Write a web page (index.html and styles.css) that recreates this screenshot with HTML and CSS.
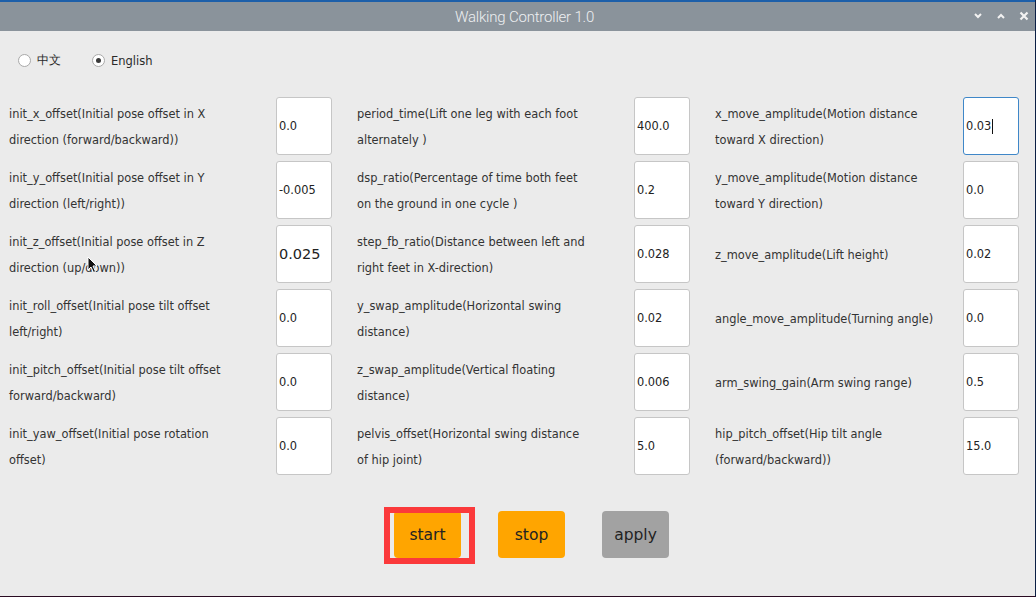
FILE: index.html
```html
<!DOCTYPE html>
<html>
<head>
<meta charset="utf-8">
<link rel="stylesheet" href="styles.css">
</head>
<body>
<div class="window">
  <div class="titlebar">
    <span class="title">Walking Controller 1.0</span>
    <div class="controls">
      <svg width="10" height="8" viewBox="0 0 10 8"><path d="M2 2 L5 5 L8 2" fill="none" stroke="#f2f2f2" stroke-width="2"/></svg>
      <svg width="10" height="8" viewBox="0 0 10 8"><path d="M2 6 L5 3 L8 6" fill="none" stroke="#f2f2f2" stroke-width="2"/></svg>
      <svg width="10" height="10" viewBox="0 0 10 10"><path d="M1.5 1.5 L8.5 8.5 M8.5 1.5 L1.5 8.5" fill="none" stroke="#f2f2f2" stroke-width="2.2"/></svg>
    </div>
  </div>
  <div class="content">
    <div class="langs">
      <label class="radio"><span class="dot"></span>中文</label>
      <label class="radio"><span class="dot on"></span>English</label>
    </div>
    <div class="grid">
      <div class="cell c1"><div class="lbl">init_x_offset(Initial pose offset in X<br>direction (forward/backward))</div><div class="box">0.0</div></div>
      <div class="cell c2"><div class="lbl">period_time(Lift one leg with each foot<br>alternately )</div><div class="box">400.0</div></div>
      <div class="cell c3"><div class="lbl">x_move_amplitude(Motion distance<br>toward X direction)</div><div class="box focus">0.03<span class="caret"></span></div></div>

      <div class="cell c1"><div class="lbl">init_y_offset(Initial pose offset in Y<br>direction (left/right))</div><div class="box">-0.005</div></div>
      <div class="cell c2"><div class="lbl">dsp_ratio(Percentage of time both feet<br>on the ground in one cycle )</div><div class="box">0.2</div></div>
      <div class="cell c3"><div class="lbl">y_move_amplitude(Motion distance<br>toward Y direction)</div><div class="box">0.0</div></div>

      <div class="cell c1"><div class="lbl">init_z_offset(Initial pose offset in Z<br>direction (up/down))<svg class="cursor" width="12" height="18" viewBox="0 0 12 18"><path d="M1 1 L1 14 L4 11 L6.5 16.5 L8.5 15.5 L6 10 L10 10 Z" fill="#111" stroke="#fff" stroke-width="1"/></svg></div><div class="box big">0.025</div></div>
      <div class="cell c2"><div class="lbl">step_fb_ratio(Distance between left and<br>right feet in X-direction)</div><div class="box">0.028</div></div>
      <div class="cell c3"><div class="lbl">z_move_amplitude(Lift height)</div><div class="box">0.02</div></div>

      <div class="cell c1"><div class="lbl">init_roll_offset(Initial pose tilt offset<br>left/right)</div><div class="box">0.0</div></div>
      <div class="cell c2"><div class="lbl">y_swap_amplitude(Horizontal swing<br>distance)</div><div class="box">0.02</div></div>
      <div class="cell c3"><div class="lbl">angle_move_amplitude(Turning angle)</div><div class="box">0.0</div></div>

      <div class="cell c1"><div class="lbl">init_pitch_offset(Initial pose tilt offset<br>forward/backward)</div><div class="box">0.0</div></div>
      <div class="cell c2"><div class="lbl">z_swap_amplitude(Vertical floating<br>distance)</div><div class="box">0.006</div></div>
      <div class="cell c3"><div class="lbl">arm_swing_gain(Arm swing range)</div><div class="box">0.5</div></div>

      <div class="cell c1"><div class="lbl">init_yaw_offset(Initial pose rotation<br>offset)</div><div class="box">0.0</div></div>
      <div class="cell c2"><div class="lbl">pelvis_offset(Horizontal swing distance<br>of hip joint)</div><div class="box">5.0</div></div>
      <div class="cell c3"><div class="lbl">hip_pitch_offset(Hip tilt angle<br>(forward/backward))</div><div class="box">15.0</div></div>
    </div>
    <div class="actions">
      <div class="btn-wrap"><button class="btn orange">start</button><span class="highlight"></span></div>
      <button class="btn orange">stop</button>
      <button class="btn gray">apply</button>
    </div>
  </div>
</div>
</body>
</html>
```
FILE: styles.css
```css
html, body {
  margin: 0;
  padding: 0;
  width: 1036px;
  height: 597px;
  overflow: hidden;
  background: #ebebeb;
}
.window {
  width: 1036px;
  height: 597px;
  box-sizing: border-box;
  border-right: 1px solid #0b1f45;
  border-bottom: 1px solid #2a0b22;
  background: #ebebeb;
  display: flex;
  flex-direction: column;
  font-family: "DejaVu Sans", sans-serif;
  color: #2f2f2f;
}
.titlebar {
  height: 31px;
  box-sizing: border-box;
  border-top: 2px solid #1d5fa9;
  background: #8a939b;
  position: relative;
  display: flex;
  align-items: center;
  justify-content: center;
}
.title {
  font-family: "Roboto", "DejaVu Sans Condensed", sans-serif;
  font-size: 15px;
  font-weight: 300;
  color: #eef0f2;
  letter-spacing: -0.2px;
  margin-left: 14px;
}
.controls {
  position: absolute;
  right: 6px;
  top: 9px;
  display: flex;
  gap: 13px;
  align-items: center;
}
.content {
  flex: 1;
  display: flex;
  flex-direction: column;
}
.langs {
  height: 59px;
  margin-bottom: 7px;
  display: flex;
  align-items: center;
  padding-left: 18px;
  gap: 31px;
  font-size: 11.5px;
}
.radio {
  display: flex;
  align-items: center;
  gap: 6px;
  color: #2a2a2a;
}
.dot {
  width: 11px;
  height: 11px;
  border: 1px solid #a9a9a9;
  border-radius: 50%;
  background: #fff;
  position: relative;
}
.dot.on::after {
  content: "";
  position: absolute;
  left: 3px;
  top: 3px;
  width: 5px;
  height: 5px;
  border-radius: 50%;
  background: #3a3a3a;
}
.grid {
  display: grid;
  grid-template-columns: 323px 333px 304px;
  grid-auto-rows: 58px;
  column-gap: 25px;
  row-gap: 6px;
  padding-left: 9px;
}
.cell {
  display: flex;
  align-items: center;
}
.lbl {
  flex: 1;
  font-size: 11.4px;
  line-height: 26px;
  color: #333;
  white-space: nowrap;
  position: relative;
  padding-top: 1px;
}
.box {
  width: 56px;
  height: 58px;
  box-sizing: border-box;
  background: #fff;
  border: 1px solid #c6c6c6;
  border-radius: 3px;
  display: flex;
  align-items: center;
  padding-left: 2px;
  font-size: 11.4px;
  color: #222;
}
.box.big {
  font-size: 14.5px;
}
.box.focus {
  border-color: #3f87c8;
}
.caret {
  display: inline-block;
  width: 1px;
  height: 15px;
  background: #111;
  margin-left: 1px;
}
.cursor {
  position: absolute;
  left: 78px;
  top: 28px;
}
.actions {
  display: flex;
  justify-content: center;
  gap: 37px;
  margin-top: 36px;
  padding-left: 28px;
}
.btn-wrap {
  position: relative;
  display: flex;
}
.btn {
  width: 67px;
  height: 47px;
  border: none;
  border-radius: 4px;
  font-family: "DejaVu Sans", sans-serif;
  font-size: 15.5px;
  color: #222;
  padding: 0;
}
.orange { background: #ffa500; }
.gray { background: #a2a2a2; }
.highlight {
  position: absolute;
  left: -10px;
  top: -4px;
  right: -14px;
  bottom: -6px;
  border: 6px solid #fb393b;
}
```
